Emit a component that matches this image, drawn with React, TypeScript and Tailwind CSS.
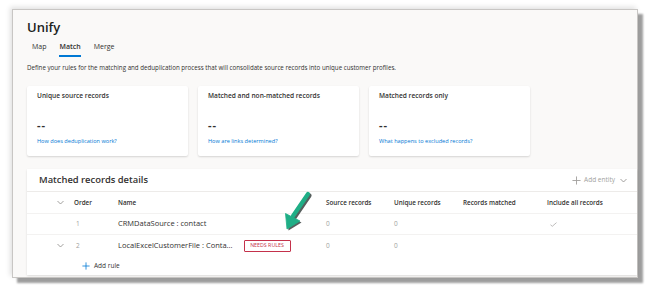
import React from "react";

const font = { fontFamily: '"Segoe UI", "Open Sans", "Noto Sans", sans-serif' };

function Chevron({ className = "" }: { className?: string }) {
  return (
    <svg width="7" height="5" viewBox="0 0 7 5" className={className}>
      <path d="M0.5 1 L3.5 4 L6.5 1" fill="none" stroke="#8a8886" strokeWidth="0.8" />
    </svg>
  );
}

function Plus({ color = "#605e5c", size = 9 }: { color?: string; size?: number }) {
  return (
    <svg width={size} height={size} viewBox="0 0 10 10">
      <path d="M5 0.5 V9.5 M0.5 5 H9.5" stroke={color} strokeWidth="1" fill="none" />
    </svg>
  );
}

function Card({ title, link }: { title: string; link: string }) {
  return (
    <div className="w-[161px] h-[70px] bg-white rounded-[2px] shadow-[0_1px_2px_rgba(0,0,0,0.15)] pl-[10px] pt-[5px] flex flex-col">
      <div className="text-[6.6px] text-[#323130] font-semibold leading-[10px]">{title}</div>
      <div className="mt-[19px] text-[11px] font-bold text-[#323130] leading-[10px] tracking-[1px]">--</div>
      <div className="mt-[7px] text-[5.6px] text-[#0078d4] leading-[8px]">{link}</div>
    </div>
  );
}

export default function App() {
  const cols = "grid grid-cols-[47px_44px_208px_68px_69px_84px_1fr] items-center";
  return (
    <div className="w-[650px] h-[288px] bg-white relative overflow-hidden" style={font}>
      <div className="absolute left-[12px] top-[9px] w-[626px] h-[269px] bg-[#faf9f8] border border-[#c8c6c4] shadow-[5px_5px_2px_rgba(0,0,0,0.38),-2px_-2px_5px_rgba(0,0,0,0.12)] flex flex-col">
        <div className="pl-[14px] pt-[9px] text-[13px] font-semibold text-[#201f1e] leading-[16px]">Unify</div>
        <div className="pl-[19px] mt-[7px] flex gap-[13px] text-[7px] text-[#323130] leading-[10px]">
          <div className="pb-[5px]">Map</div>
          <div className="pb-[3px] font-semibold border-b-[2px] border-[#0078d4]">Match</div>
          <div className="pb-[5px]">Merge</div>
        </div>
        <div className="pl-[14px] mt-[6px] text-[6.2px] text-[#323130] leading-[10px]">
          Define your rules for the matching and deduplication process that will consolidate source records into unique customer profiles.
        </div>
        <div className="pl-[14px] mt-[13px] flex gap-[10px] shrink-0">
          <Card title="Unique source records" link="How does deduplication work?" />
          <Card title="Matched and non-matched records" link="How are links determined?" />
          <Card title="Matched records only" link="What happens to excluded records?" />
        </div>
        <div className="ml-[14px] mt-[13px] h-[106px] shrink-0 bg-white shadow-[0_1px_2px_rgba(0,0,0,0.12)] flex flex-col">
          <div className="h-[23px] shrink-0 flex items-center justify-between pl-[12px] pr-[10px] border-b border-[#edebe9]">
            <div className="text-[9.4px] font-semibold text-[#323130]">Matched records details</div>
            <div className="flex items-center gap-[3px] text-[6.5px] text-[#a19f9d]">
              <Plus color="#a19f9d" size={9} />
              <span>Add entity</span>
              <Chevron className="ml-[2px]" />
            </div>
          </div>
          <div className={`${cols} h-[22px] shrink-0 border-b border-[#f3f2f1] text-[6.3px] text-[#323130] font-semibold`}>
            <div className="pl-[30px]"><Chevron /></div>
            <div>Order</div>
            <div>Name</div>
            <div>Source records</div>
            <div>Unique records</div>
            <div>Records matched</div>
            <div>Include all records</div>
          </div>
          <div className={`${cols} h-[21px] shrink-0 border-b border-[#f3f2f1] text-[6.5px] text-[#a19f9d]`}>
            <div />
            <div className="pl-[2px]">1</div>
            <div className="text-[7.5px] text-[#323130]">CRMDataSource : contact</div>
            <div>0</div>
            <div>0</div>
            <div />
            <div className="pl-[3px]">
              <svg width="7" height="5" viewBox="0 0 7 5"><path d="M0.5 2.8 L2.3 4.3 L6.5 0.6" fill="none" stroke="#a19f9d" strokeWidth="0.7" /></svg>
            </div>
          </div>
          <div className={`${cols} h-[21px] shrink-0 text-[6.5px] text-[#a19f9d]`}>
            <div className="pl-[30px]"><Chevron /></div>
            <div className="pl-[2px]">2</div>
            <div className="flex items-center">
              <span className="text-[7.5px] text-[#323130]">LocalExcelCustomerFile : Conta...</span>
              <span className="ml-[11px] h-[12px] w-[47px] border border-[#c4314b] text-[#c4314b] text-[5.3px] flex items-center justify-center rounded-[1px]">NEEDS RULES</span>
            </div>
            <div>0</div>
            <div>0</div>
            <div />
            <div />
          </div>
          <div className="pl-[55px] mt-[5px] flex items-center gap-[4px] text-[6.5px] leading-[10px] text-[#323130]">
            <Plus color="#0078d4" size={8} />
            <span>Add rule</span>
          </div>
        </div>
      </div>
      <svg className="absolute left-0 top-0" width="650" height="288" viewBox="0 0 650 288">
        <g transform="translate(1.5,1.5)" opacity="0.75">
          <path d="M308 194 L293 216" stroke="#1f2a28" strokeWidth="4.2" strokeLinecap="round" />
          <path d="M287 229 L285.5 213.5 L300 221 Z" fill="#1f2a28" />
        </g>
        <path d="M308 194 L293 216" stroke="#1fae86" strokeWidth="4.2" strokeLinecap="round" />
        <path d="M287 229 L285.5 213.5 L300 221 Z" fill="#1fae86" stroke="#1fae86" strokeWidth="0.8" strokeLinejoin="round" />
      </svg>
    </div>
  );
}
